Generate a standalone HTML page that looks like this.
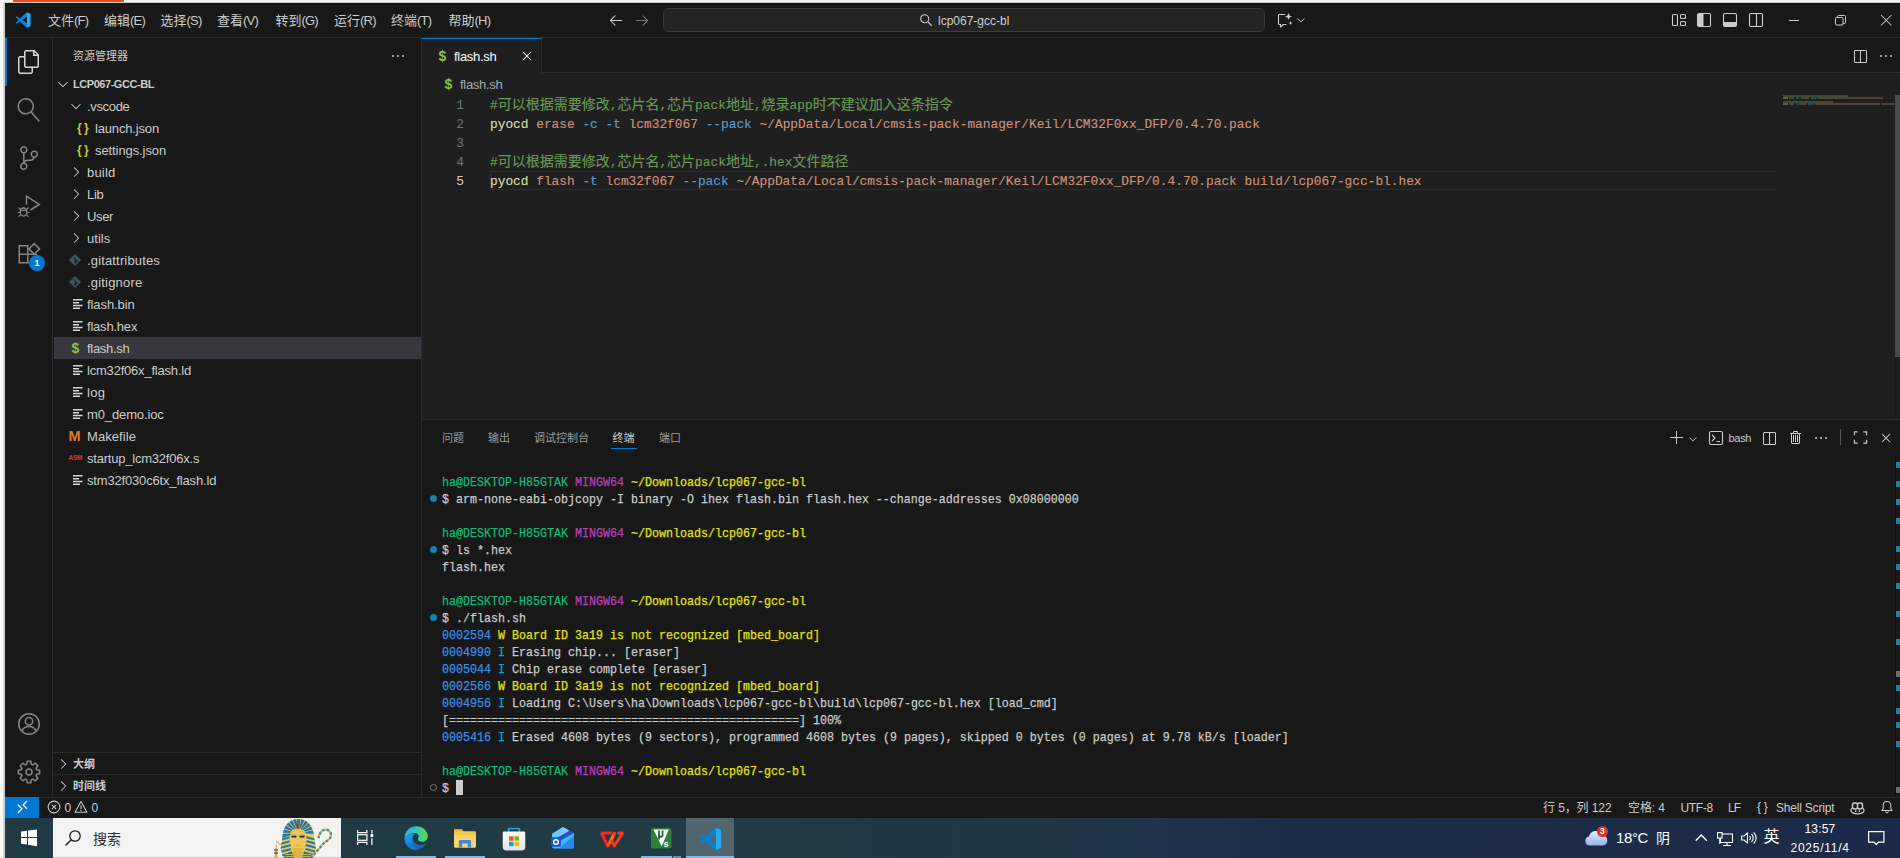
<!DOCTYPE html>
<html lang="zh-CN">
<head>
<meta charset="utf-8">
<title>flash.sh - lcp067-gcc-bl - Visual Studio Code</title>
<style>
*{box-sizing:border-box;margin:0;padding:0}
html,body{width:1900px;height:858px;overflow:hidden;background:#fff}
body{position:relative;font-family:"Liberation Sans","Noto Sans CJK SC",sans-serif;font-size:13px;color:#ccc;-webkit-font-smoothing:antialiased}
.abs{position:absolute}
.ui{font-family:"Liberation Sans","Noto Sans CJK SC",sans-serif}
.mono{font-family:"Liberation Mono","Noto Sans CJK SC",monospace}
svg{display:block;overflow:visible}
/* ---------- frame ---------- */
#vsc{position:absolute;left:5px;top:3px;width:1895px;height:815px;background:#181818}
/* ---------- title bar ---------- */
#titlebar{position:absolute;left:5px;top:3px;width:1895px;height:35px;background:#181818;border-bottom:1px solid #2b2b2b}
.menu{position:absolute;top:12px;height:17px;line-height:17px;font-size:13px;color:#ccc;white-space:nowrap}
/* ---------- activity bar ---------- */
#activity{position:absolute;left:5px;top:38px;width:48px;height:759px;background:#181818;border-right:1px solid #2b2b2b}
/* ---------- sidebar ---------- */
#sidebar{position:absolute;left:54px;top:38px;width:368px;height:759px;background:#181818;border-right:1px solid #2b2b2b}
.row{position:absolute;left:54px;width:367px;height:22px;line-height:22px;font-size:13px;color:#ccc;white-space:nowrap}
.row .lbl{position:absolute;top:0}
.row.sel{background:#37373d}
/* ---------- editor ---------- */
#editor{position:absolute;left:422px;top:38px;width:1478px;height:381px;background:#1f1f1f}
#tabs{position:absolute;left:422px;top:38px;width:1478px;height:35px;background:#181818;border-bottom:1px solid #2b2b2b}
#tab1{position:absolute;left:422px;top:38px;width:120px;height:35px;background:#1f1f1f;border-top:1px solid #0078d4;border-right:1px solid #2b2b2b}
.code{position:absolute;left:490px;height:19px;line-height:19px;font-size:12.83px;white-space:pre;color:#ccc;-webkit-text-stroke:0.15px}
.ln{position:absolute;left:422px;width:42px;text-align:right;height:19px;line-height:19px;font-size:12.83px;color:#6e7681}
.cj{font-size:14px}
.c-com{color:#6a9955}.c-fn{color:#dcdcaa}.c-str{color:#ce9178}.c-kw{color:#569cd6}
/* ---------- panel ---------- */
#panel{position:absolute;left:422px;top:419px;width:1478px;height:378px;background:#181818;border-top:1px solid #2b2b2b}
.ptab{position:absolute;top:430px;height:16px;line-height:16px;font-size:11px;color:#9d9d9d;white-space:nowrap}
.term{position:absolute;left:442px;height:17px;line-height:17px;font-size:13.3px;white-space:pre;color:#ccc;transform:scaleX(0.8770);transform-origin:0 0;-webkit-text-stroke:0.25px}
.t-g{color:#0dbc79}.t-m{color:#bc3fbc}.t-y{color:#e5e510}.t-b{color:#3b8eea}.t-c{color:#11a8cd}
/* ---------- status bar ---------- */
#status{position:absolute;left:5px;top:797px;width:1895px;height:21px;background:#181818;border-top:1px solid #2b2b2b}
.st{position:absolute;top:799px;height:18px;line-height:18px;font-size:12px;color:#ccc;white-space:nowrap}
/* ---------- taskbar ---------- */
#taskbar{position:absolute;left:0;top:818px;width:1900px;height:40px;background:linear-gradient(90deg,#203a44 0%,#213a45 40%,#203648 58%,#1d2e48 70%,#1b2a48 100%)}
.tb{position:absolute;color:#fff;white-space:nowrap}
</style>
</head>
<body>
<!-- outer window frame (another window peeking at top / left) -->
<div class="abs" style="left:0;top:0;width:1900px;height:3px;background:#f3f3f3"></div>
<div class="abs" style="left:13px;top:0;width:111px;height:2px;background:#ea4e1b"></div>
<div class="abs" style="left:0;top:2px;width:1900px;height:1px;background:#c8c8c8"></div>
<div class="abs" style="left:0;top:0;width:5px;height:818px;background:#fafafa"></div>
<div class="abs" style="left:3px;top:2px;width:2px;height:816px;background:#d0d0d0"></div>

<div id="vsc"></div>
<div id="titlebar"></div>
<div id="activity"></div>
<div id="sidebar"></div>
<div id="editor"></div>
<div id="tabs"></div>
<div id="tab1"></div>
<div id="panel"></div>
<div id="status"></div>
<div id="taskbar"></div>

<svg class="abs" style="left:14.5px;top:12px" width="16" height="16" viewBox="0 0 16 16" ><path fill="#0a7fd0" d="M11.7.3 4.9 6.5 2 4.3.6 5 3.5 8 .6 11l1.4.7 2.9-2.2 6.8 6.2 3.7-1.7V2z M11.9 4.7v6.6L7.5 8z"/><path fill="#29a9f5" d="M11.7.3 15.4 2v12l-3.7 1.7c.2-.2.2-.5.2-.8V1.1c0-.3 0-.6-.2-.8z"/></svg>
<div class="menu" style="left:48px">文件<span style="letter-spacing:-0.800px">(F)</span></div>
<div class="menu" style="left:104px">编辑<span style="letter-spacing:-0.800px">(E)</span></div>
<div class="menu" style="left:160.5px">选择<span style="letter-spacing:-0.800px">(S)</span></div>
<div class="menu" style="left:217px">查看<span style="letter-spacing:-0.800px">(V)</span></div>
<div class="menu" style="left:275.5px">转到<span style="letter-spacing:-0.800px">(G)</span></div>
<div class="menu" style="left:334px">运行<span style="letter-spacing:-0.800px">(R)</span></div>
<div class="menu" style="left:391px">终端<span style="letter-spacing:-0.800px">(T)</span></div>
<div class="menu" style="left:448.5px">帮助<span style="letter-spacing:-0.800px">(H)</span></div>
<svg class="abs" style="left:607.5px;top:12px;" width="16" height="16" viewBox="0 0 16 16"><path fill="#cccccc" d="M7 3.093l-5 5V8.8l5 5 .707-.707-4.146-4.147H14v-1H3.56L7.708 3.8 7 3.093z"/></svg>
<svg class="abs" style="left:633.5px;top:12px;" width="16" height="16" viewBox="0 0 16 16"><path fill="#7a7a7a" d="M9 13.887l5-5V8.18l-5-5-.707.707 4.146 4.147H2v1h10.44L8.292 13.18l.707.707z"/></svg>
<div class="abs" style="left:663px;top:8px;width:602px;height:24px;background:#242424;border:1px solid #3c3c3c;border-radius:6px"></div>
<svg class="abs" style="left:919px;top:13px" width="14" height="14" viewBox="0 0 16 16" ><circle cx="6.5" cy="6.5" r="4.6" fill="none" stroke="#cccccc" stroke-width="1.2"/><path d="M10 10l4.6 4.6" stroke="#cccccc" stroke-width="1.3" fill="none"/></svg>
<div class="abs" style="left:938px;top:13px;height:17px;line-height:17px;font-size:12px;color:#ccc;white-space:nowrap" id="cc-text">lcp067-gcc-bl</div>
<svg class="abs" style="left:1277px;top:12px" width="16" height="16" viewBox="0 0 16 16" ><path d="M9.5 12.5H6.2L3.5 15v-2.5H2.5a1 1 0 0 1-1-1V3.5a1 1 0 0 1 1-1h5.5" fill="none" stroke="#cccccc" stroke-width="1.1" stroke-linejoin="round"/><path d="M11.5 1l1 2.5 2.5 1-2.5 1-1 2.5-1-2.5L8 4.5l2.500-1z" fill="#cccccc"/><path d="M13.5 9l.6 1.4 1.400.6-1.400.6-.6 1.400-.6-1.400-1.400-.6 1.400-.6z" fill="#cccccc"/></svg>
<svg class="abs" style="left:1295px;top:14px;" width="12" height="12" viewBox="0 0 16 16"><path fill="#cccccc" d="M7.976 10.072l4.357-4.357.62.618L8.284 11h-.618L3 6.333l.619-.618 4.357 4.357z"/></svg>
<svg class="abs" style="left:1670.5px;top:12px" width="16" height="16" viewBox="0 0 16 16" ><rect x="1.5" y="2.5" width="5" height="11" rx="1" fill="none" stroke="#cccccc" stroke-width="1.1"/><rect x="9.5" y="2.5" width="5" height="4" rx="1" fill="none" stroke="#cccccc" stroke-width="1.1"/><rect x="9.500" y="9.5" width="5" height="4" rx="1" fill="none" stroke="#cccccc" stroke-width="1.1"/></svg>
<svg class="abs" style="left:1696px;top:12px" width="16" height="16" viewBox="0 0 16 16" ><rect x="1.5" y="1.500" width="13" height="13" rx="1.500" fill="none" stroke="#cccccc" stroke-width="1.1"/><path d="M2 2h5.500v12H2z" fill="#cccccc"/></svg>
<svg class="abs" style="left:1722px;top:12px" width="16" height="16" viewBox="0 0 16 16" ><rect x="1.5" y="1.5" width="13" height="13" rx="1.5" fill="none" stroke="#cccccc" stroke-width="1.1"/><path d="M2 10h12v4H2z" fill="#cccccc"/></svg>
<svg class="abs" style="left:1748px;top:12px" width="16" height="16" viewBox="0 0 16 16" ><rect x="1.500" y="1.5" width="13" height="13" rx="1.5" fill="none" stroke="#cccccc" stroke-width="1.1"/><path d="M8.5 2v12" stroke="#cccccc" stroke-width="1.1"/></svg>
<div class="abs" style="left:1789px;top:20px;width:10px;height:1px;background:#cccccc"></div>
<svg class="abs" style="left:1834.5px;top:15px" width="11" height="11" viewBox="0 0 11 11" ><rect x="0.5" y="2.5" width="7.5" height="7.5" rx="1" fill="none" stroke="#cccccc" stroke-width="1"/><path d="M2.500 2.500V1.500a1 1 0 0 1 1-1h6a1 1 0 0 1 1 1v6a1 1 0 0 1-1 1H8" fill="none" stroke="#cccccc" stroke-width="1"/></svg>
<svg class="abs" style="left:1881px;top:15px" width="10.5" height="10.5" viewBox="0 0 10 10" ><path d="M0 0l10 10M10 0L0 10" stroke="#cccccc" stroke-width="1" fill="none"/></svg>
<div class="abs" style="left:5px;top:38px;width:2px;height:48px;background:#0078d4"></div>
<svg class="abs" style="left:17px;top:50px;" width="24" height="24" viewBox="0 0 24 24"><path fill="#d7d7d7" d="M17.5 0h-9L7 1.5V6H2.5L1 7.5v15.07L2.5 24h12.07L16 22.57V18h4.7l1.3-1.43V4.5L17.5 0zm0 2.12l2.38 2.38H17.5V2.12zm-3 20.38h-12v-15H7v9.07L8.5 18h6v4.5zm6-6h-12v-15H16V6h4.5v10.5z"/></svg>
<svg class="abs" style="left:17px;top:98px;transform:scaleX(-1)" width="24" height="24" viewBox="0 0 24 24"><path fill="#868686" d="M15.25 0a8.25 8.25 0 0 0-6.18 13.72L1 22.88l1.12 1 8.05-9.12A8.251 8.251 0 1 0 15.25.01V0zm0 15a6.75 6.75 0 1 1 0-13.5 6.75 6.75 0 0 1 0 13.5z"/></svg>
<svg class="abs" style="left:17px;top:146px;" width="24" height="24" viewBox="0 0 24 24"><path fill="#868686" d="M21.007 8.222A3.738 3.738 0 0 0 15.045 5.2a3.737 3.737 0 0 0 1.156 6.583 2.988 2.988 0 0 1-2.668 1.67h-2.99a4.456 4.456 0 0 0-2.989 1.165V7.4a3.737 3.737 0 1 0-1.494 0v9.117a3.776 3.776 0 1 0 1.816.099 2.99 2.99 0 0 1 2.668-1.667h2.99a4.484 4.484 0 0 0 4.223-3.039 3.736 3.736 0 0 0 3.25-3.687zM4.565 3.738a2.242 2.242 0 1 1 4.484 0 2.242 2.242 0 0 1-4.484 0zm4.484 16.441a2.242 2.242 0 1 1-4.484 0 2.242 2.242 0 0 1 4.484 0zm8.221-9.715a2.242 2.242 0 1 1 0-4.485 2.242 2.242 0 0 1 0 4.485z"/></svg>
<svg class="abs" style="left:17px;top:194px" width="24" height="24" viewBox="0 0 24 24" ><path d="M9.5 10.500V2.2L22.300 10.400 13.500 16" fill="none" stroke="#868686" stroke-width="1.5" stroke-linejoin="miter"/><ellipse cx="6.5" cy="18" rx="3.300" ry="4" fill="none" stroke="#868686" stroke-width="1.4"/><path d="M3.300 16.300H9.700M6.500 14.200v-1.200M3.200 18.500H0.500M12.500 18.500H9.800M3.600 15.500L1.500 13.500M9.400 15.500l2.100-2M3.600 20.800L1.500 22.800M9.400 20.800l2.100 2" fill="none" stroke="#868686" stroke-width="1.2"/></svg>
<svg class="abs" style="left:17px;top:242px" width="24" height="24" viewBox="0 0 24 24" ><path d="M2.250 3.750h8.500v8.500h-8.500zM2.250 12.250h8.500v8.500h-8.500zM10.750 12.250h8.500v8.500h-8.500z" fill="none" stroke="#868686" stroke-width="1.5"/><path d="M17.250 1.600l5.300 5.300-5.300 5.300-5.300-5.300z" fill="none" stroke="#868686" stroke-width="1.500"/></svg>
<div class="abs" style="left:29px;top:254.500px;width:16px;height:16px;border-radius:8px;background:#0078d4;color:#fff;font-size:9px;font-weight:bold;line-height:16px;text-align:center">1</div>
<svg class="abs" style="left:17px;top:712px" width="24" height="24" viewBox="0 0 24 24" ><circle cx="12" cy="12" r="10.250" fill="none" stroke="#868686" stroke-width="1.5"/><circle cx="12" cy="9.300" r="3.700" fill="none" stroke="#868686" stroke-width="1.5"/><path d="M4.800 19.200c1.300-3.300 3.800-4.700 7.200-4.700s5.900 1.400 7.200 4.700" fill="none" stroke="#868686" stroke-width="1.5"/></svg>
<svg class="abs" style="left:17px;top:760px" width="24" height="24" viewBox="0 0 24 24" ><path d="M10.17 1.36 L13.83 1.36 L14.36 4.36 L15.73 4.92 L18.23 3.18 L20.82 5.77 L19.08 8.27 L19.64 9.64 L22.64 10.17 L22.64 13.83 L19.64 14.36 L19.08 15.73 L20.82 18.23 L18.23 20.82 L15.73 19.08 L14.36 19.64 L13.83 22.64 L10.17 22.64 L9.64 19.64 L8.27 19.08 L5.77 20.82 L3.18 18.23 L4.92 15.73 L4.36 14.36 L1.36 13.83 L1.36 10.17 L4.36 9.64 L4.92 8.27 L3.18 5.77 L5.77 3.18 L8.27 4.92 L9.64 4.36Z" fill="none" stroke="#868686" stroke-width="1.500" stroke-linejoin="round"/><circle cx="12" cy="12" r="3" fill="none" stroke="#868686" stroke-width="1.500"/></svg>
<div class="abs ui" style="left:73px;top:47px;height:18px;line-height:18px;font-size:11px;color:#ccc;white-space:nowrap">资源管理器</div>
<svg class="abs" style="left:390px;top:48px;" width="16" height="16" viewBox="0 0 16 16"><path fill="#cccccc" d="M4 8a1 1 0 1 1-2 0 1 1 0 0 1 2 0zm5 0a1 1 0 1 1-2 0 1 1 0 0 1 2 0zm5 0a1 1 0 1 1-2 0 1 1 0 0 1 2 0z"/></svg>
<svg class="abs" style="left:55px;top:76px;" width="16" height="16" viewBox="0 0 16 16"><path fill="#cccccc" d="M7.976 10.072l4.357-4.357.62.618L8.284 11h-.618L3 6.333l.619-.618 4.357 4.357z"/></svg>
<div class="abs ui" style="left:73px;top:73px;height:22px;line-height:22px;font-size:11px;font-weight:bold;color:#ccc;letter-spacing:-0.45px;white-space:nowrap">LCP067-GCC-BL</div>
<svg class="abs" style="left:68px;top:98px;" width="16" height="16" viewBox="0 0 16 16"><path fill="#cccccc" d="M7.976 10.072l4.357-4.357.62.618L8.284 11h-.618L3 6.333l.619-.618 4.357 4.357z"/></svg>
<div class="abs ui" style="left:87px;top:96px;height:22px;line-height:22px;font-size:13px;letter-spacing:-0.33px;color:#ccc;white-space:nowrap">.vscode</div>
<div class="abs ui" style="left:77px;top:117px;height:22px;line-height:22px;font-size:12px;font-weight:bold;color:#cbcb41;letter-spacing:2.300px;white-space:nowrap">{}</div>
<div class="abs ui" style="left:95px;top:118px;height:22px;line-height:22px;font-size:13px;letter-spacing:-0.162px;color:#ccc;white-space:nowrap">launch.json</div>
<div class="abs ui" style="left:77px;top:139px;height:22px;line-height:22px;font-size:12px;font-weight:bold;color:#cbcb41;letter-spacing:2.300px;white-space:nowrap">{}</div>
<div class="abs ui" style="left:95px;top:140px;height:22px;line-height:22px;font-size:13px;letter-spacing:-0.09px;color:#ccc;white-space:nowrap">settings.json</div>
<svg class="abs" style="left:68px;top:164px;" width="16" height="16" viewBox="0 0 16 16"><path fill="#cccccc" d="M10.072 8.024L5.715 3.667l.618-.62L11 7.716v.618L6.333 13l-.618-.619 4.357-4.357z"/></svg>
<div class="abs ui" style="left:87px;top:162px;height:22px;line-height:22px;font-size:13px;letter-spacing:0.186px;color:#ccc;white-space:nowrap">build</div>
<svg class="abs" style="left:68px;top:186px;" width="16" height="16" viewBox="0 0 16 16"><path fill="#cccccc" d="M10.072 8.024L5.715 3.667l.618-.62L11 7.716v.618L6.333 13l-.618-.619 4.357-4.357z"/></svg>
<div class="abs ui" style="left:87px;top:184px;height:22px;line-height:22px;font-size:13px;letter-spacing:-0.286px;color:#ccc;white-space:nowrap">Lib</div>
<svg class="abs" style="left:68px;top:208px;" width="16" height="16" viewBox="0 0 16 16"><path fill="#cccccc" d="M10.072 8.024L5.715 3.667l.618-.62L11 7.716v.618L6.333 13l-.618-.619 4.357-4.357z"/></svg>
<div class="abs ui" style="left:87px;top:206px;height:22px;line-height:22px;font-size:13px;letter-spacing:-0.363px;color:#ccc;white-space:nowrap">User</div>
<svg class="abs" style="left:68px;top:230px;" width="16" height="16" viewBox="0 0 16 16"><path fill="#cccccc" d="M10.072 8.024L5.715 3.667l.618-.62L11 7.716v.618L6.333 13l-.618-.619 4.357-4.357z"/></svg>
<div class="abs ui" style="left:87px;top:228px;height:22px;line-height:22px;font-size:13px;letter-spacing:0.035px;color:#ccc;white-space:nowrap">utils</div>
<svg class="abs" style="left:69px;top:254px" width="12" height="12" viewBox="0 0 12 12" ><path d="M6 0l6 6-6 6-6-6z" fill="#41535b"/><path d="M4.600 3.200l1.700 1.700v3.600M6.300 5.600l1.500 1.500" stroke="#181818" stroke-width="1" fill="none"/><circle cx="6.300" cy="8.600" r=".9" fill="#181818"/><circle cx="8" cy="7.200" r=".9" fill="#181818"/></svg>
<div class="abs ui" style="left:87px;top:250px;height:22px;line-height:22px;font-size:13px;letter-spacing:0.155px;color:#ccc;white-space:nowrap">.gitattributes</div>
<svg class="abs" style="left:69px;top:276px" width="12" height="12" viewBox="0 0 12 12" ><path d="M6 0l6 6-6 6-6-6z" fill="#41535b"/><path d="M4.600 3.200l1.700 1.700v3.600M6.300 5.600l1.500 1.500" stroke="#181818" stroke-width="1" fill="none"/><circle cx="6.300" cy="8.600" r=".9" fill="#181818"/><circle cx="8" cy="7.200" r=".9" fill="#181818"/></svg>
<div class="abs ui" style="left:87px;top:272px;height:22px;line-height:22px;font-size:13px;letter-spacing:0.182px;color:#ccc;white-space:nowrap">.gitignore</div>
<svg class="abs" style="left:72.5px;top:299px" width="11" height="11" viewBox="0 0 11 11" ><path d="M0 .75h9.500M0 3.75h6M0 6.500h9.500M0 9.250h7" stroke="#d4d7d6" stroke-width="1.400" fill="none"/></svg>
<div class="abs ui" style="left:87px;top:294px;height:22px;line-height:22px;font-size:13px;letter-spacing:-0.08px;color:#ccc;white-space:nowrap">flash.bin</div>
<svg class="abs" style="left:72.5px;top:321px" width="11" height="11" viewBox="0 0 11 11" ><path d="M0 .75h9.500M0 3.75h6M0 6.500h9.500M0 9.250h7" stroke="#d4d7d6" stroke-width="1.400" fill="none"/></svg>
<div class="abs ui" style="left:87px;top:316px;height:22px;line-height:22px;font-size:13px;letter-spacing:-0.205px;color:#ccc;white-space:nowrap">flash.hex</div>
<div class="abs" style="left:54px;top:337px;width:367px;height:22px;background:#37373d"></div>
<div class="abs ui" style="left:71.500px;top:336.5px;height:22px;line-height:22px;font-size:14px;font-weight:bold;color:#8dc149;white-space:nowrap">$</div>
<div class="abs ui" style="left:87px;top:338px;height:22px;line-height:22px;font-size:13px;letter-spacing:-0.302px;color:#ccc;white-space:nowrap">flash.sh</div>
<svg class="abs" style="left:72.5px;top:365px" width="11" height="11" viewBox="0 0 11 11" ><path d="M0 .75h9.500M0 3.75h6M0 6.500h9.500M0 9.250h7" stroke="#d4d7d6" stroke-width="1.400" fill="none"/></svg>
<div class="abs ui" style="left:87px;top:360px;height:22px;line-height:22px;font-size:13px;letter-spacing:-0.204px;color:#ccc;white-space:nowrap">lcm32f06x_flash.ld</div>
<svg class="abs" style="left:72.5px;top:387px" width="11" height="11" viewBox="0 0 11 11" ><path d="M0 .75h9.500M0 3.75h6M0 6.500h9.500M0 9.250h7" stroke="#d4d7d6" stroke-width="1.400" fill="none"/></svg>
<div class="abs ui" style="left:87px;top:382px;height:22px;line-height:22px;font-size:13px;letter-spacing:0.347px;color:#ccc;white-space:nowrap">log</div>
<svg class="abs" style="left:72.5px;top:409px" width="11" height="11" viewBox="0 0 11 11" ><path d="M0 .75h9.500M0 3.75h6M0 6.500h9.500M0 9.250h7" stroke="#d4d7d6" stroke-width="1.400" fill="none"/></svg>
<div class="abs ui" style="left:87px;top:404px;height:22px;line-height:22px;font-size:13px;letter-spacing:-0.122px;color:#ccc;white-space:nowrap">m0_demo.ioc</div>
<div class="abs ui" style="left:68.500px;top:425px;height:22px;line-height:22px;font-size:14.500px;font-weight:bold;color:#e37933;white-space:nowrap">M</div>
<div class="abs ui" style="left:87px;top:426px;height:22px;line-height:22px;font-size:13px;letter-spacing:0.072px;color:#ccc;white-space:nowrap">Makefile</div>
<div class="abs ui" style="left:68.500px;top:447px;height:22px;line-height:22px;font-size:6.500px;font-weight:bold;color:#cc3e44;letter-spacing:-0.3px;white-space:nowrap">ASM</div>
<div class="abs ui" style="left:87px;top:448px;height:22px;line-height:22px;font-size:13px;letter-spacing:-0.218px;color:#ccc;white-space:nowrap">startup_lcm32f06x.s</div>
<svg class="abs" style="left:72.5px;top:475px" width="11" height="11" viewBox="0 0 11 11" ><path d="M0 .75h9.500M0 3.75h6M0 6.500h9.500M0 9.250h7" stroke="#d4d7d6" stroke-width="1.400" fill="none"/></svg>
<div class="abs ui" style="left:87px;top:470px;height:22px;line-height:22px;font-size:13px;letter-spacing:-0.171px;color:#ccc;white-space:nowrap">stm32f030c6tx_flash.ld</div>
<div class="abs" style="left:54px;top:752px;width:367px;height:1px;background:#2b2b2b"></div>
<svg class="abs" style="left:55px;top:756px;" width="16" height="16" viewBox="0 0 16 16"><path fill="#cccccc" d="M10.072 8.024L5.715 3.667l.618-.62L11 7.716v.618L6.333 13l-.618-.619 4.357-4.357z"/></svg>
<div class="abs ui" style="left:73px;top:753px;height:22px;line-height:22px;font-size:11px;font-weight:bold;color:#ccc;white-space:nowrap">大纲</div>
<div class="abs" style="left:54px;top:774px;width:367px;height:1px;background:#2b2b2b"></div>
<svg class="abs" style="left:55px;top:778px;" width="16" height="16" viewBox="0 0 16 16"><path fill="#cccccc" d="M10.072 8.024L5.715 3.667l.618-.62L11 7.716v.618L6.333 13l-.618-.619 4.357-4.357z"/></svg>
<div class="abs ui" style="left:73px;top:775px;height:22px;line-height:22px;font-size:11px;font-weight:bold;color:#ccc;white-space:nowrap">时间线</div>
<div class="abs ui" style="left:438.500px;top:38.500px;height:34px;line-height:34px;font-size:14px;font-weight:bold;color:#8dc149;white-space:nowrap">$</div>
<div class="abs ui" style="left:454px;top:40px;height:34px;line-height:34px;font-size:13px;letter-spacing:-0.3px;color:#ffffff;white-space:nowrap">flash.sh</div>
<svg class="abs" style="left:519px;top:48px;" width="16" height="16" viewBox="0 0 16 16"><path fill="#ffffff" d="M8 8.707l3.646 3.647.708-.707L8.707 8l3.647-3.646-.707-.708L8 7.293 4.354 3.646l-.707.708L7.293 8l-3.646 3.646.707.708L8 8.707z"/></svg>
<svg class="abs" style="left:1852px;top:48.5px;" width="16" height="16" viewBox="0 0 16 16"><path fill="#cccccc" d="M14 1H3L2 2v11l1 1h11l1-1V2l-1-1zM8 13H3V2h5v11zm6 0H9V2h5v11z"/></svg>
<svg class="abs" style="left:1878px;top:48px;" width="16" height="16" viewBox="0 0 16 16"><path fill="#cccccc" d="M4 8a1 1 0 1 1-2 0 1 1 0 0 1 2 0zm5 0a1 1 0 1 1-2 0 1 1 0 0 1 2 0zm5 0a1 1 0 1 1-2 0 1 1 0 0 1 2 0z"/></svg>
<div class="abs ui" style="left:444.500px;top:72.500px;height:22px;line-height:22px;font-size:14px;font-weight:bold;color:#8dc149;white-space:nowrap">$</div>
<div class="abs ui" style="left:460px;top:74px;height:22px;line-height:22px;font-size:13px;letter-spacing:-0.3px;color:#a9a9a9;white-space:nowrap">flash.sh</div>
<div class="abs" style="left:490px;top:171px;width:1285px;height:19px;border:1px solid #2c2c2c;border-right:none"></div>
<div class="ln mono" style="top:96px;color:#6e7681">1</div>
<div class="code mono" style="top:96px"><span class="c-com">#<span class="cj">可以根据需要修改</span>,<span class="cj">芯片名</span>,<span class="cj">芯片</span>pack<span class="cj">地址</span>,<span class="cj">烧录</span>app<span class="cj">时不建议加入这条指令</span></span></div>
<div class="ln mono" style="top:115px;color:#6e7681">2</div>
<div class="code mono" style="top:115px"><span class="c-fn">pyocd</span> <span class="c-str">erase</span> <span class="c-kw">-c</span> <span class="c-kw">-t</span> <span class="c-str">lcm32f067</span> <span class="c-kw">--pack</span> <span class="c-str">~/AppData/Local/cmsis-pack-manager/Keil/LCM32F0xx_DFP/0.4.70.pack</span></div>
<div class="ln mono" style="top:134px;color:#6e7681">3</div>
<div class="ln mono" style="top:153px;color:#6e7681">4</div>
<div class="code mono" style="top:153px"><span class="c-com">#<span class="cj">可以根据需要修改</span>,<span class="cj">芯片名</span>,<span class="cj">芯片</span>pack<span class="cj">地址</span>,.hex<span class="cj">文件路径</span></span></div>
<div class="ln mono" style="top:172px;color:#cccccc">5</div>
<div class="code mono" style="top:172px"><span class="c-fn">pyocd</span> <span class="c-str">flash</span> <span class="c-kw">-t</span> <span class="c-str">lcm32f067</span> <span class="c-kw">--pack</span> <span class="c-str">~/AppData/Local/cmsis-pack-manager/Keil/LCM32F0xx_DFP/0.4.70.pack</span> <span class="c-str">build/lcp067-gcc-bl.hex</span></div>
<div class="abs" style="left:1783px;top:95px;width:65px;height:2px;background:#4a6e3c;opacity:.6"></div>
<div class="abs" style="left:1783px;top:97px;width:5px;height:2px;background:#8a8a70;opacity:.6"></div>
<div class="abs" style="left:1789px;top:97px;width:5px;height:2px;background:#7a5848;opacity:.6"></div>
<div class="abs" style="left:1796px;top:97px;width:3px;height:2px;background:#3a5f86;opacity:.6"></div>
<div class="abs" style="left:1801px;top:97px;width:8px;height:2px;background:#7a5848;opacity:.6"></div>
<div class="abs" style="left:1811px;top:97px;width:6px;height:2px;background:#3a5f86;opacity:.6"></div>
<div class="abs" style="left:1818px;top:97px;width:65px;height:2px;background:#7a5848;opacity:.6"></div>
<div class="abs" style="left:1783px;top:101px;width:50px;height:2px;background:#4a6e3c;opacity:.6"></div>
<div class="abs" style="left:1783px;top:103px;width:5px;height:2px;background:#8a8a70;opacity:.6"></div>
<div class="abs" style="left:1789px;top:103px;width:5px;height:2px;background:#7a5848;opacity:.6"></div>
<div class="abs" style="left:1796px;top:103px;width:2px;height:2px;background:#3a5f86;opacity:.6"></div>
<div class="abs" style="left:1799px;top:103px;width:8px;height:2px;background:#7a5848;opacity:.6"></div>
<div class="abs" style="left:1808px;top:103px;width:6px;height:2px;background:#3a5f86;opacity:.6"></div>
<div class="abs" style="left:1815px;top:103px;width:65px;height:2px;background:#7a5848;opacity:.6"></div>
<div class="abs" style="left:1881px;top:103px;width:14px;height:2px;background:#7a5848;opacity:.6"></div>
<div class="abs" style="left:1895px;top:95px;width:1px;height:324px;background:#191919"></div>
<div class="abs" style="left:1895px;top:95px;width:5px;height:262px;background:#4a4a4a"></div>
<div class="ptab ui" style="left:442px;color:#9d9d9d">问题</div>
<div class="ptab ui" style="left:488px;color:#9d9d9d">输出</div>
<div class="ptab ui" style="left:534px;color:#9d9d9d">调试控制台</div>
<div class="ptab ui" style="left:612.5px;color:#cccccc">终端</div>
<div class="ptab ui" style="left:659px;color:#9d9d9d">端口</div>
<div class="abs" style="left:611px;top:448px;width:26px;height:1px;background:#0078d4"></div>
<svg class="abs" style="left:1669px;top:430px;" width="16" height="16" viewBox="0 0 16 16"><path fill="#cccccc" d="M14 7v1H8v6H7V8H1V7h6V1h1v6h6z"/></svg>
<svg class="abs" style="left:1687px;top:432.5px;" width="12" height="12" viewBox="0 0 16 16"><path fill="#cccccc" d="M7.976 10.072l4.357-4.357.62.618L8.284 11h-.618L3 6.333l.619-.618 4.357 4.357z"/></svg>
<svg class="abs" style="left:1708px;top:429.5px" width="16" height="16" viewBox="0 0 16 16" ><rect x="1.500" y="1.500" width="13" height="13" rx="1.500" fill="none" stroke="#cccccc" stroke-width="1.100"/><path d="M4 5l3 3-3 3M8.500 11.500h3.500" fill="none" stroke="#cccccc" stroke-width="1.100"/></svg>
<div class="abs ui" style="left:1728.500px;top:429.500px;height:16px;line-height:16px;font-size:11px;letter-spacing:-0.300px;color:#cccccc;white-space:nowrap">bash</div>
<svg class="abs" style="left:1761px;top:430.5px;" width="16" height="16" viewBox="0 0 16 16"><path fill="#cccccc" d="M14 1H3L2 2v11l1 1h11l1-1V2l-1-1zM8 13H3V2h5v11zm6 0H9V2h5v11z"/></svg>
<svg class="abs" style="left:1787.5px;top:430px;" width="16" height="16" viewBox="0 0 16 16"><path fill="#cccccc" d="M10 3h3v1h-1v9l-1 1H4l-1-1V4H2V3h3V2a1 1 0 0 1 1-1h3a1 1 0 0 1 1 1v1zM9 2H6v1h3V2zM4 13h7V4H4v9zm2-8H5v7h1V5zm1 0h1v7H7V5zm2 0h1v7H9V5z"/></svg>
<svg class="abs" style="left:1813px;top:430px;" width="16" height="16" viewBox="0 0 16 16"><path fill="#cccccc" d="M4 8a1 1 0 1 1-2 0 1 1 0 0 1 2 0zm5 0a1 1 0 1 1-2 0 1 1 0 0 1 2 0zm5 0a1 1 0 1 1-2 0 1 1 0 0 1 2 0z"/></svg>
<div class="abs" style="left:1840px;top:429px;width:1px;height:16px;background:#5a5a5a"></div>
<svg class="abs" style="left:1852.5px;top:430px" width="15" height="15" viewBox="0 0 16 15" ><path d="M1.500 5V1.500H5M11 1.500h3.500V5M14.500 10v3.500H11M5 13.500H1.500V10" fill="none" stroke="#cccccc" stroke-width="1.200"/></svg>
<svg class="abs" style="left:1878px;top:429.5px;" width="16" height="16" viewBox="0 0 16 16"><path fill="#cccccc" d="M8 8.707l3.646 3.647.708-.707L8.707 8l3.647-3.646-.707-.708L8 7.293 4.354 3.646l-.707.708L7.293 8l-3.646 3.646.707.708L8 8.707z"/></svg>
<div class="term mono" style="top:473.5px"><span class="t-g">ha@DESKTOP-H85GTAK</span> <span class="t-m">MINGW64</span> <span class="t-y">~/Downloads/lcp067-gcc-bl</span></div>
<div class="term mono" style="top:490.5px">$ arm-none-eabi-objcopy -I binary -O ihex flash.bin flash.hex --change-addresses 0x08000000</div>
<div class="term mono" style="top:524.5px"><span class="t-g">ha@DESKTOP-H85GTAK</span> <span class="t-m">MINGW64</span> <span class="t-y">~/Downloads/lcp067-gcc-bl</span></div>
<div class="term mono" style="top:541.5px">$ ls *.hex</div>
<div class="term mono" style="top:558.5px">flash.hex</div>
<div class="term mono" style="top:592.5px"><span class="t-g">ha@DESKTOP-H85GTAK</span> <span class="t-m">MINGW64</span> <span class="t-y">~/Downloads/lcp067-gcc-bl</span></div>
<div class="term mono" style="top:609.5px">$ ./flash.sh</div>
<div class="term mono" style="top:626.5px"><span class="t-b">0002594</span> <span class="t-y">W Board ID 3a19 is not recognized [mbed_board]</span></div>
<div class="term mono" style="top:643.5px"><span class="t-b">0004990</span> <span class="t-c">I</span> Erasing chip... [eraser]</div>
<div class="term mono" style="top:660.5px"><span class="t-b">0005044</span> <span class="t-c">I</span> Chip erase complete [eraser]</div>
<div class="term mono" style="top:677.5px"><span class="t-b">0002566</span> <span class="t-y">W Board ID 3a19 is not recognized [mbed_board]</span></div>
<div class="term mono" style="top:694.5px"><span class="t-b">0004956</span> <span class="t-c">I</span> Loading C:\Users\ha\Downloads\lcp067-gcc-bl\build\lcp067-gcc-bl.hex [load_cmd]</div>
<div class="term mono" style="top:711.5px">[==================================================] 100%</div>
<div class="term mono" style="top:728.5px"><span class="t-b">0005416</span> <span class="t-c">I</span> Erased 4608 bytes (9 sectors), programmed 4608 bytes (9 pages), skipped 0 bytes (0 pages) at 9.78 kB/s [loader]</div>
<div class="term mono" style="top:762.5px"><span class="t-g">ha@DESKTOP-H85GTAK</span> <span class="t-m">MINGW64</span> <span class="t-y">~/Downloads/lcp067-gcc-bl</span></div>
<div class="term mono" style="top:779.5px">$ </div>
<div class="abs" style="left:456px;top:780px;width:7px;height:15px;background:#cccccc"></div>
<div class="abs" style="left:429.500px;top:494.5px;width:7px;height:7px;border-radius:4px;background:#1b81a8"></div>
<div class="abs" style="left:429.500px;top:545.5px;width:7px;height:7px;border-radius:4px;background:#1b81a8"></div>
<div class="abs" style="left:429.500px;top:613.5px;width:7px;height:7px;border-radius:4px;background:#1b81a8"></div>
<div class="abs" style="left:429.500px;top:783.5px;width:7px;height:7px;border-radius:4px;border:1.500px solid #7a7a7a"></div>
<div class="abs" style="left:1895px;top:456px;width:1px;height:340px;background:#0c0c0c"></div>
<div class="abs" style="left:1896px;top:462px;width:4px;height:6px;background:#1b81a8"></div>
<div class="abs" style="left:1896px;top:481px;width:4px;height:6px;background:#1b81a8"></div>
<div class="abs" style="left:1896px;top:499px;width:4px;height:6px;background:#1b81a8"></div>
<div class="abs" style="left:1896px;top:518px;width:4px;height:6px;background:#1b81a8"></div>
<div class="abs" style="left:1896px;top:546px;width:4px;height:6px;background:#1b81a8"></div>
<div class="abs" style="left:1896px;top:564px;width:4px;height:6px;background:#1b81a8"></div>
<div class="abs" style="left:1896px;top:583px;width:4px;height:6px;background:#1b81a8"></div>
<div class="abs" style="left:1896px;top:611px;width:4px;height:6px;background:#1b81a8"></div>
<div class="abs" style="left:1896px;top:639px;width:4px;height:6px;background:#1b81a8"></div>
<div class="abs" style="left:1896px;top:685px;width:4px;height:6px;background:#1b81a8"></div>
<div class="abs" style="left:1896px;top:708px;width:4px;height:6px;background:#1b81a8"></div>
<div class="abs" style="left:1896px;top:722px;width:4px;height:6px;background:#1b81a8"></div>
<div class="abs" style="left:1896px;top:741px;width:4px;height:6px;background:#1b81a8"></div>
<div class="abs" style="left:1896px;top:671px;width:4px;height:6px;background:#6b6b6b"></div>
<div class="abs" style="left:1896px;top:787px;width:4px;height:6px;background:#6b6b6b"></div>
<div class="abs" style="left:5px;top:797px;width:34px;height:21px;background:#0078d4"></div>
<svg class="abs" style="left:17px;top:800px" width="11" height="14" viewBox="0 0 11 14" ><path d="M.900 4.700L5 8.700 .900 13M10 1L6.200 5 10 8.700" fill="none" stroke="#ffffff" stroke-width="1.200"/></svg>
<svg class="abs" style="left:47px;top:799.5px" width="14" height="14" viewBox="0 0 16 16" ><circle cx="8" cy="8" r="6.700" fill="none" stroke="#cccccc" stroke-width="1.200"/><path d="M5.500 5.500l5 5M10.500 5.500l-5 5" stroke="#cccccc" stroke-width="1.200" fill="none"/></svg>
<div class="st ui" style="left:64.500px">0</div>
<svg class="abs" style="left:74px;top:799.5px" width="14" height="14" viewBox="0 0 16 16" ><path d="M8 1.800L14.800 14H1.200z" fill="none" stroke="#cccccc" stroke-width="1.200" stroke-linejoin="round"/><path d="M8 6v4.500M8 11.500v1.400" stroke="#cccccc" stroke-width="1.200" fill="none"/></svg>
<div class="st ui" style="left:91.500px">0</div>
<div class="st ui" style="left:1543px;letter-spacing:-0.1px">行 5，列 122</div>
<div class="st ui" style="left:1628px;letter-spacing:-0.1px">空格: 4</div>
<div class="st ui" style="left:1680.5px;letter-spacing:-0.35px">UTF-8</div>
<div class="st ui" style="left:1728px;letter-spacing:-0.8px">LF</div>
<div class="st ui" style="left:1776px;letter-spacing:-0.2px">Shell Script</div>
<div class="st ui" style="left:1757px;top:798px;letter-spacing:2.800px;font-size:12px">{}</div>
<svg class="abs" style="left:1849.5px;top:800.5px" width="15" height="13.5" viewBox="0 0 16 15" ><path d="M2.600 7.800C1.200 8.600.700 9.600.700 10.600c0 2 3.200 3.700 7.300 3.700s7.300-1.700 7.300-3.700c0-1-.500-2-1.900-2.800" fill="none" stroke="#cccccc" stroke-width="1.500"/><path d="M4.600 2.300h1.200c1.400 0 2.200.9 2.200 2.200v1.800c0 1.500-1 2.500-2.500 2.500h-.900c-1.400 0-2.200-.9-2.200-2.300V4.800c0-1.500.800-2.500 2.200-2.500zM10.200 2.300h1.200c1.400 0 2.200 1 2.200 2.500v1.700c0 1.400-.800 2.300-2.200 2.300h-.900C9 8.800 8 7.800 8 6.300V4.500c0-1.300.800-2.200 2.200-2.200z" fill="none" stroke="#cccccc" stroke-width="1.600"/><path d="M6 10.300v1.900M10 10.300v1.900" stroke="#cccccc" stroke-width="1.500"/></svg>
<svg class="abs" style="left:1880px;top:799.5px" width="14" height="14" viewBox="0 0 16 16" ><path d="M8 1.800c-2.700 0-4.300 2-4.300 4.500v3.200L2.200 12h11.600l-1.500-2.500V6.300c0-2.500-1.600-4.500-4.300-4.500z" fill="none" stroke="#cccccc" stroke-width="1.200" stroke-linejoin="round"/><path d="M6.300 13.200a1.800 1.800 0 0 0 3.400 0" fill="none" stroke="#cccccc" stroke-width="1.200"/></svg>
<div class="abs" style="left:0;top:818px;width:3px;height:40px;background:#fafafa"></div>
<div class="abs" style="left:3px;top:818px;width:2px;height:40px;background:#d0d0d0"></div>
<svg class="abs" style="left:21px;top:830px" width="16" height="16" viewBox="0 0 16 16" ><path d="M0 1.500L6 .700V7H0zM7 .600L16 -.500V7H7zM0 8H6V14.500L0 13.700zM7 8H16V16.200L7 14.700z" fill="#ffffff"/></svg>
<div class="abs" style="left:53px;top:818px;width:288px;height:40px;background:#f3f3f3;border-bottom:1px solid #c9c9c9"></div>
<svg class="abs" style="left:65px;top:830px" width="16" height="16.5" viewBox="0 0 16 16.500" ><circle cx="10" cy="6" r="5.200" fill="none" stroke="#1a1a1a" stroke-width="1.300"/><path d="M6.300 9.700L.500 15.500" stroke="#1a1a1a" stroke-width="1.400" fill="none"/></svg>
<div class="abs ui" style="left:93px;top:828px;height:22px;line-height:22px;font-size:14px;color:#2b2b2b;white-space:nowrap">搜索</div>
<svg class="abs" style="left:271px;top:818px" width="64" height="40" viewBox="0 0 64 40" ><clipPath id="phc"><rect x="0" y="0" width="64" height="40"/></clipPath><g clip-path="url(#phc)"><path d="M3.500 40L5.200 23 6.700 40z" fill="#e0b040"/><rect x="3.300" y="31" width="3.600" height="2" fill="#2a8cc0"/><rect x="3.300" y="34" width="3.600" height="2" fill="#c84a1a"/><path d="M5.200 23c5 3 8 9 10 17" fill="none" stroke="#c89a3c" stroke-width="1"/><clipPath id="hdc"><path d="M27.300 1C18 1 12.500 8 11.500 18 11 24 9.500 28 9.800 31.500L12 40H42.600L44.800 31.500C45.100 28 43.600 24 43.100 18 42.100 8 36.600 1 27.300 1z"/></clipPath><path d="M27.300 1C18 1 12.500 8 11.500 18 11 24 9.500 28 9.800 31.500L12 40H42.600L44.800 31.500C45.100 28 43.600 24 43.100 18 42.100 8 36.600 1 27.300 1z" fill="#efc54c"/><g clip-path="url(#hdc)"><path d="M27.300 15L-11.3 26.4L-12.9 17.5z" fill="#1f78b0"/><path d="M27.300 15L-13.0 14.6L-11.9 5.7z" fill="#1f78b0"/><path d="M27.300 15L-11.1 2.8L-7.4 -5.4z" fill="#1f78b0"/><path d="M27.300 15L-5.8 -7.8L0.1 -14.6z" fill="#1f78b0"/><path d="M27.300 15L2.3 -16.5L9.9 -21.3z" fill="#1f78b0"/><path d="M27.300 15L12.6 -22.5L21.3 -24.8z" fill="#1f78b0"/><path d="M27.300 15L24.2 -25.1L33.2 -24.8z" fill="#1f78b0"/><path d="M27.300 15L36.1 -24.3L44.6 -21.4z" fill="#1f78b0"/><path d="M27.300 15L47.2 -20.0L54.5 -14.7z" fill="#1f78b0"/><path d="M27.300 15L56.5 -12.7L62.0 -5.5z" fill="#1f78b0"/><path d="M27.300 15L63.3 -2.9L66.4 5.5z" fill="#1f78b0"/><path d="M27.300 15L67.0 8.4L67.5 17.4z" fill="#1f78b0"/><path d="M5 23L20 19M49.600 23L34.600 19" stroke="#1f78b0" stroke-width="2" fill="none"/><path d="M5 27L20 23M49.600 27L34.600 23" stroke="#1f78b0" stroke-width="2" fill="none"/><path d="M5 31L20 27M49.600 31L34.600 27" stroke="#1f78b0" stroke-width="2" fill="none"/><path d="M5 35L20 31M49.600 35L34.600 31" stroke="#1f78b0" stroke-width="2" fill="none"/><path d="M5 39L20 35M49.600 39L34.600 35" stroke="#1f78b0" stroke-width="2" fill="none"/></g><ellipse cx="27" cy="21.500" rx="8.700" ry="9.800" fill="#f0c757"/><path d="M18.500 16c2-7 15-7 17 0-3-3-14-3-17 0z" fill="#edc24a"/><rect x="25.800" y="5" width="2.400" height="5.500" fill="#c8321e"/><circle cx="27" cy="4" r="1.600" fill="#2a7fb8"/><path d="M20.500 18.800h5M28.500 18.800h5" stroke="#1a2a44" stroke-width="1.500"/><path d="M20 17.300h5.500M28.500 17.300h5.500" stroke="#2a7fb8" stroke-width=".7"/><path d="M24.500 27.300h5" stroke="#c59a3a" stroke-width=".7"/><path d="M22.500 30h9l1.500 10H21z" fill="#e2b344"/><path d="M13 40c1-4 4-6 8-6.500l2 6.500zM41 40c-1-4-4-6-8-6.500L31 40z" fill="#1f78b0"/><path d="M14 36.500h8M14.500 38.500h8M32 36.500h8M31.500 38.500h8" stroke="#edc24a" stroke-width=".8"/><path d="M40 40L52 26c3-3.500 8-4 8-9 0-4-4-6-7-5-3.500 1-5 5-5.500 8" fill="none" stroke="#e0b040" stroke-width="2.200"/><path d="M40 40L52 26c3-3.500 8-4 8-9 0-4-4-6-7-5-3.500 1-5 5-5.500 8" fill="none" stroke="#1f8cc4" stroke-width="2.200" stroke-dasharray="2 2.500"/></g></svg>
<svg class="abs" style="left:357px;top:830px" width="16.5" height="15" viewBox="0 0 16.500 15" ><path d="M.600 0V2.600H9.900V0M.600 15V12.400H9.900V15" fill="none" stroke="#ffffff" stroke-width="1.200"/><rect x=".600" y="4.700" width="9.300" height="5.600" fill="none" stroke="#ffffff" stroke-width="1.200"/><path d="M14.900 0V3.500M14.900 8.300V15" stroke="#ffffff" stroke-width="1.200"/><rect x="13.500" y="4" width="2.800" height="3" fill="#ffffff"/></svg>
<div class="abs" style="left:686px;top:818px;width:48px;height:40px;background:rgba(255,255,255,0.22)"></div>
<svg class="abs" style="left:404px;top:826px" width="24.4" height="24.1" viewBox="0 0 24.400 24.100" ><defs><linearGradient id="eg1" x1="0" y1="0" x2="1" y2="0"><stop offset="0" stop-color="#2db7ee"/><stop offset=".45" stop-color="#2fc3c0"/><stop offset="1" stop-color="#62d84e"/></linearGradient><linearGradient id="eg2" x1="0" y1="0" x2="1" y2="1"><stop offset="0" stop-color="#1a8fe0"/><stop offset="1" stop-color="#0f55a8"/></linearGradient><linearGradient id="eg3" x1="0" y1="0" x2="0" y2="1"><stop offset="0" stop-color="#1f9fe6"/><stop offset="1" stop-color="#1673c9"/></linearGradient></defs><path d="M.600 12.600C.400 5.500 5.500.200 12.200.200c6.600 0 11.300 4.700 11.600 9.600.200 3.600-2.200 6-5.600 6-2.800 0-4.300-1.300-4.300-2.800 0-1 .800-1.500.800-2.700 0-1.800-1.600-3.200-3.900-3.200C6 7.100 1.800 9.500.600 12.600z" fill="url(#eg1)"/><path d="M.600 12.600c0 6.400 5 11.300 11.200 11.300 4 0 7.600-2 9.700-5.200.300-.500-.100-.900-.600-.600-1.200.700-2.500 1-3.900 1-4.700 0-8.300-3.400-8.300-7.200 0-1.800.900-3.300 2.100-4.100C5.500 7.200 1.300 9.400.600 12.600z" fill="url(#eg2)"/><path d="M.600 12.600c0 6.400 5 11.300 11.200 11.300 1 0 2-.100 2.900-.400-4.300-.900-7.400-4.700-7.400-9.200 0-2.700 1.300-5.100 3.500-6.500C5.500 7.200 1.300 9.400.600 12.600z" fill="url(#eg3)"/></svg>
<svg class="abs" style="left:454px;top:828.5px" width="22" height="18.5" viewBox="1 2.500 20 16" preserveAspectRatio="none"><path d="M1 3.500a1 1 0 0 1 1-1h6l2 2.500H1z" fill="#e8a93a"/><rect x="1" y="4.500" width="20" height="14" rx="1" fill="#f7c64a"/><path d="M1 8h20v9.500a1 1 0 0 1-1 1H2a1 1 0 0 1-1-1z" fill="#fbd66a"/><path d="M5.500 18.500v-5.500a1 1 0 0 1 1-1h9a1 1 0 0 1 1 1v5.500h-3v-3.500h-5v3.500z" fill="#3b8be0"/></svg>
<svg class="abs" style="left:501.5px;top:826.5px" width="24" height="24" viewBox="0 0 24 24.500" ><defs><linearGradient id="sg" x1="0" y1="0" x2="0" y2="1"><stop offset="0" stop-color="#ffffff"/><stop offset="1" stop-color="#e4e4e4"/></linearGradient></defs><path d="M6.500 7V2.500a1 1 0 0 1 1-1h9a1 1 0 0 1 1 1V7" fill="none" stroke="#29a3ef" stroke-width="1.700"/><path d="M.500 6a1.500 1.500 0 0 1 1.500-1.500h20A1.500 1.500 0 0 1 23.500 6v14.500A3.500 3.500 0 0 1 20 24H4A3.500 3.500 0 0 1 .500 20.500z" fill="url(#sg)"/><rect x="7" y="9.500" width="4.500" height="4.500" fill="#f25022"/><rect x="12.500" y="9.500" width="4.500" height="4.500" fill="#7fba00"/><rect x="7" y="15" width="4.500" height="4.500" fill="#00a4ef"/><rect x="12.500" y="15" width="4.500" height="4.500" fill="#ffb900"/></svg>
<svg class="abs" style="left:551px;top:827px" width="23" height="22" viewBox="0 0 23 22" ><path d="M12 0L23 6.500V19.500a2 2 0 0 1-2 2H3a2 2 0 0 1-2-2V7z" fill="#38bdf6"/><path d="M12 0L18.500 3.800 5 11.500 1 8.500V7z" fill="#74cbfb"/><path d="M5 11.500L18.500 3.800 22.500 6.200 8 14.500z" fill="#2f4cc8"/><path d="M23 8.500V19.500a2 2 0 0 1-2 2H8z" fill="#2a88ea"/><rect x="0" y="10.300" width="10" height="9.500" rx="2" fill="#1059c9"/><circle cx="5" cy="15" r="2.300" fill="none" stroke="#ffffff" stroke-width="1.500"/></svg>
<svg class="abs" style="left:600px;top:830.5px" width="24" height="16" viewBox="0 0 24 16" ><defs><linearGradient id="wg" x1="0" y1="1" x2="1" y2="0"><stop offset="0" stop-color="#ff4a12"/><stop offset=".6" stop-color="#ff7a1f"/><stop offset="1" stop-color="#f5281c"/></linearGradient></defs><path d="M.800 2H12M1.500 2L7.800 15 15.200 1.300" fill="none" stroke="#f5281c" stroke-width="3" stroke-linejoin="round"/><path d="M7.800 15L15.200 1.300" fill="none" stroke="url(#wg)" stroke-width="3"/><path d="M11.300 8.500L14.200 15 22.800 2M17.500 2H23.500" fill="none" stroke="#fa3a18" stroke-width="3" stroke-linejoin="round"/></svg>
<svg class="abs" style="left:650.5px;top:827.5px" width="20.5" height="20.5" viewBox="0 0 20.500 20.500" ><rect x="0" y="0" width="20.500" height="20.500" rx="2" fill="#2e7d3c"/><path d="M2.400 1.600H17.800L10.700 18.200z" fill="#ffffff"/><path d="M8 2.500v9M8 2.500v4.500c0 1.300.7 1.900 1.800 1.900s1.800-.6 1.800-1.900V2.500" fill="none" stroke="#1f5a2a" stroke-width="1.700"/></svg>
<div class="abs ui" style="left:663.500px;top:838.500px;font-size:9px;font-weight:bold;color:#ffffff;line-height:10px">s</div>
<svg class="abs" style="left:698px;top:826.5px" width="24" height="24" viewBox="0 0 24 24" ><path fill="#0a7fd0" d="M17.500.400 7.300 9.700 3 6.400.900 7.500 5.200 12 .900 16.500 3 17.600l4.300-3.300 10.200 9.300 5.600-2.600V3z M17.900 7v10L11.200 12z"/><path fill="#29a9f5" d="M17.500.400 23.100 3v18l-5.600 2.600c.3-.3.400-.8.400-1.200V1.600c0-.4-.1-.9-.4-1.200z"/></svg>
<div class="abs" style="left:396px;top:856px;width:40px;height:2px;background:#76b9ed"></div>
<div class="abs" style="left:445px;top:856px;width:40px;height:2px;background:#76b9ed"></div>
<div class="abs" style="left:641px;top:856px;width:31px;height:2px;background:#76b9ed"></div>
<div class="abs" style="left:686px;top:856px;width:48px;height:2px;background:#76b9ed"></div>
<div class="abs" style="left:673px;top:856px;width:8px;height:2px;background:#5a8fb8"></div>
<svg class="abs" style="left:1584px;top:830px" width="25" height="16" viewBox="0 0 25 16" ><defs><linearGradient id="clg" x1="0" y1="0" x2="0" y2="1"><stop offset="0" stop-color="#e8f0fb"/><stop offset="1" stop-color="#8fb0e8"/></linearGradient></defs><path d="M5.500 15.500A4.500 4.500 0 0 1 5 6.600 7 7 0 0 1 18.300 5.200 5.200 5.200 0 0 1 19 15.500z" fill="url(#clg)"/></svg>
<div class="abs ui" style="left:1596.500px;top:825.500px;width:11.500px;height:11.500px;border-radius:6px;background:#d9362c;color:#fff;font-size:8.500px;font-weight:bold;line-height:11.500px;text-align:center">3</div>
<div class="tb ui" style="left:1616px;top:827px;height:22px;line-height:22px;font-size:15px;letter-spacing:-0.4px">18°C</div>
<div class="tb ui" style="left:1656px;top:827px;height:22px;line-height:22px;font-size:14px">阴</div>
<svg class="abs" style="left:1695px;top:833px" width="12.5" height="9" viewBox="0 0 12.500 9" ><path d="M.700 7.800L6.250 2 11.800 7.800" fill="none" stroke="#ffffff" stroke-width="1.400"/></svg>
<svg class="abs" style="left:1717px;top:831.5px" width="16" height="14" viewBox="0 0 16 14" ><rect x="3.500" y="2" width="12" height="8.500" fill="none" stroke="#ffffff" stroke-width="1.100"/><path d="M6 13.500h8M10 10.500v3" stroke="#ffffff" stroke-width="1.100"/><rect x=".550" y=".550" width="4.500" height="5.500" fill="#1d3248" stroke="#ffffff" stroke-width="1.100"/><path d="M2.800 6v6" stroke="#ffffff" stroke-width="1.100"/></svg>
<svg class="abs" style="left:1741px;top:831px" width="16" height="14" viewBox="0 0 16 14" ><path d="M.600 5h2.500L6.500 1.800v10.400L3.100 9H.600z" fill="none" stroke="#ffffff" stroke-width="1.100" stroke-linejoin="round"/><path d="M8.500 4.800a3 3 0 0 1 0 4.400M10.500 3a5.500 5.500 0 0 1 0 8M12.700 1.300a8 8 0 0 1 0 11.400" fill="none" stroke="#ffffff" stroke-width="1.100"/></svg>
<div class="tb ui" style="left:1763.500px;top:826px;height:22px;line-height:22px;font-size:16px">英</div>
<div class="tb ui" style="left:1804.500px;top:820px;height:18px;line-height:18px;font-size:12px;letter-spacing:0.154px">13:57</div>
<div class="tb ui" style="left:1790.500px;top:839px;height:18px;line-height:18px;font-size:12px;letter-spacing:0.744px">2025/11/4</div>
<svg class="abs" style="left:1868px;top:830.5px" width="16.5" height="15" viewBox="0 0 16.500 15" ><path d="M.600 .600h15.300v10.500H10.500L8.250 13.500 6 11.100H.600z" fill="none" stroke="#ffffff" stroke-width="1.200"/></svg>
</body>
</html>
